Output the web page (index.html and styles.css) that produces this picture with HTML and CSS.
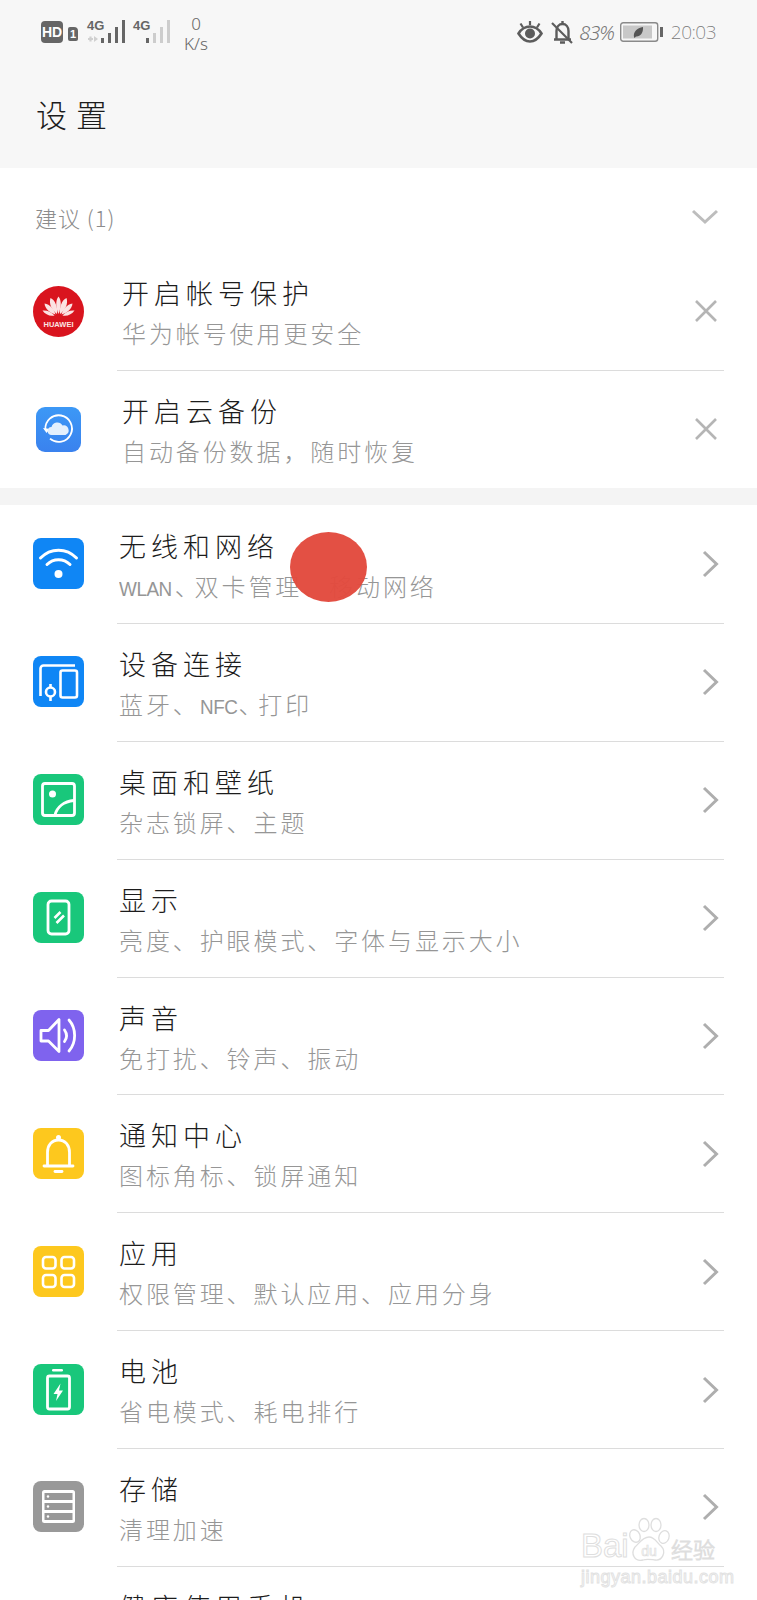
FILE: index.html
```html
<!DOCTYPE html>
<html lang="zh-CN">
<head>
    <meta charset="UTF-8">
    <title>设置</title>
    <link rel="stylesheet" href="styles.css">
</head>
<body>
    <div class="header">
        <div class="statusbar">
            <div class="status-left">
                <span class="hd">HD</span>
                <span class="sim">1</span>
                <div class="net net-first">
                    <span class="net-label">4G</span>
                    <svg class="bars" width="38" height="24" viewBox="0 0 38 24">
                        <path d="M1 19h5M3.500 16.500v5" stroke="#d0d0d0" stroke-width="2.200" fill="none"/>
                        <path d="M7 16v6l4-3z" fill="#d0d0d0"/>
                        <rect x="14" y="18" width="3" height="5" fill="#666"/>
                        <rect x="21" y="13" width="3" height="10" fill="#666"/>
                        <rect x="28" y="7" width="3" height="16" fill="#666"/>
                        <rect x="35" y="0" width="3" height="23" fill="#666"/>
                    </svg>
                </div>
                <div class="net net-second">
                    <span class="net-label">4G</span>
                    <svg class="bars" width="24" height="24" viewBox="0 0 24 24">
                        <rect x="0" y="18" width="3" height="5" fill="#666"/>
                        <rect x="7" y="13" width="3" height="10" fill="#cdcdcd"/>
                        <rect x="14" y="7" width="3" height="16" fill="#cdcdcd"/>
                        <rect x="21" y="0" width="3" height="23" fill="#cdcdcd"/>
                    </svg>
                </div>
                <div class="speed"><span>0</span><span>K/s</span></div>
            </div>
            <div class="status-right">
                <svg width="26" height="24" viewBox="0 0 26 24">
                    <path d="M1.500 13.500C5 8 9 6.500 13 6.500s8 1.500 11.500 7C21 19 17 21.500 13 21.500S5 19 1.500 13.500z" fill="none" stroke="#5c5c5c" stroke-width="2.600"/>
                    <circle cx="13" cy="13.500" r="5" fill="#5c5c5c"/>
                    <path d="M13 1v4M3.500 3.500l2.500 4M22.500 3.500L20 7.500" stroke="#5c5c5c" stroke-width="2.200"/>
                </svg>
                <svg class="bell-off" width="23" height="25" viewBox="0 0 23 25">
                    <path d="M3 19.500h17M5.500 19.500V11c0-4 2.500-7 6-7s6 3 6 7v8.500" fill="none" stroke="#5c5c5c" stroke-width="2.400"/>
                    <path d="M11.500 1v3M9 22.500h5" stroke="#5c5c5c" stroke-width="2.400"/>
                    <path d="M1 3l20 20" stroke="#5c5c5c" stroke-width="2.200"/>
                </svg>
                <span class="percent">83%</span>
                <svg class="battery" width="44" height="20" viewBox="0 0 44 20">
                    <rect x="0.700" y="0.700" width="37" height="18.600" rx="2.500" fill="none" stroke="#8a8a8a" stroke-width="1.400"/>
                    <rect x="3" y="3.500" width="29" height="13" fill="#c8c8c8"/>
                    <path d="M14 15c-1-5 3-9 9-10 .500 6-3 10-7 9.500l-1.500 1.500z" fill="#555"/>
                    <rect x="40" y="5" width="3" height="10" fill="#666"/>
                </svg>
                <span class="clock">20:03</span>
            </div>
        </div>
        <h1 class="page-title">设置</h1>
    </div>

    <section class="suggest">
        <div class="suggest-head">
            <span class="suggest-label">建议 (1)</span>
            <svg width="28" height="16" viewBox="0 0 28 16"><path d="M2 2l12 11L26 2" fill="none" stroke="#bdbdbd" stroke-width="3"/></svg>
        </div>
        <div class="row row-suggest">
            <div class="icon">
                <svg width="51" height="51" viewBox="0 0 51 51">
                    <circle cx="25.500" cy="25.500" r="25.500" fill="#d9141e"/>
                    <g fill="#fbe3e3">
                        <path d="M25.500 28C23 22 22 15 25.500 10.500 29 15 28 22 25.500 28z"/>
                        <path d="M24 28C19 24 15.500 18 17.500 12 22 14 25 21 24 28z"/>
                        <path d="M27 28C32 24 35.500 18 33.500 12 29 14 26 21 27 28z"/>
                        <path d="M22.500 28.500C17 27 12 23 11.500 17.500 17 18.500 21 23 22.500 28.500z"/>
                        <path d="M28.500 28.500C34 27 39 23 39.500 17.500 34 18.500 30 23 28.500 28.500z"/>
                        <path d="M21.500 29.500C17 30.500 12 28.500 9.500 24.500 14 24 18.500 26 21.500 29.500z"/>
                        <path d="M29.500 29.500C34 30.500 39 28.500 41.500 24.500 37 24 32.500 26 29.500 29.500z"/>
                    </g>
                    <text class="huawei-text" x="25.500" y="40.500" text-anchor="middle">HUAWEI</text>
                </svg>
            </div>
            <div class="row-main">
                <div class="row-text">
                    <div class="row-title">开启帐号保护</div>
                    <div class="row-sub">华为帐号使用更安全</div>
                </div>
                <svg class="close" width="24" height="24" viewBox="0 0 24 24"><path d="M2 2l20 20M22 2L2 22" stroke="#b5b5b5" stroke-width="2.600"/></svg>
            </div>
        </div>
        <div class="row row-suggest">
            <div class="icon">
                <svg width="51" height="51" viewBox="0 0 51 51">
                    <defs>
                        <linearGradient id="cloudbg" x1="0" y1="0" x2="0" y2="1">
                            <stop offset="0" stop-color="#3c98f6"/>
                            <stop offset="1" stop-color="#3a82ee"/>
                        </linearGradient>
                    </defs>
                    <rect x="3" y="3" width="45" height="45" rx="9" fill="url(#cloudbg)"/>
                    <path d="M12.500 27A13.300 13.300 0 1 1 18 35.500" fill="none" stroke="#fff" stroke-width="1.800" transform="rotate(6 25.500 25.500)"/>
                    <path d="M10 24l3.500 5 3.500-4z" fill="#fff"/>
                    <path d="M19 31a4 4 0 0 1-.500-8 6 6 0 0 1 11-1.500 5 5 0 0 1 3 9.500z" fill="#e4f0fd"/>
                </svg>
            </div>
            <div class="row-main no-line">
                <div class="row-text">
                    <div class="row-title">开启云备份</div>
                    <div class="row-sub">自动备份数据，随时恢复</div>
                </div>
                <svg class="close" width="24" height="24" viewBox="0 0 24 24"><path d="M2 2l20 20M22 2L2 22" stroke="#b5b5b5" stroke-width="2.600"/></svg>
            </div>
        </div>
    </section>

    <div class="band"></div>

    <section class="list">
        <div class="row">
            <div class="icon icon-blue">
                <svg width="51" height="51" viewBox="0 0 51 51" fill="none" stroke="#fff" stroke-width="3" stroke-linecap="round">
                    <path d="M7.500 20c10-10.500 26-10.500 36 0"/>
                    <path d="M14 26.500c6.500-6.500 16.500-6.500 23 0"/>
                    <circle cx="25.500" cy="36" r="4" fill="#fff" stroke="none"/>
                </svg>
            </div>
            <div class="row-main">
                <div class="row-text">
                    <div class="row-title">无线和网络</div>
                    <div class="row-sub"><span class="latin">WLAN</span><span class="dun">、</span>双卡管理、移动网络</div>
                </div>
                <svg class="chevron" width="17" height="28" viewBox="0 0 17 28"><path d="M2 2l12.500 12L2 26" fill="none" stroke="#aeaeae" stroke-width="3"/></svg>
            </div>
        </div>
        <div class="row">
            <div class="icon icon-blue">
                <svg width="51" height="51" viewBox="0 0 51 51" fill="none" stroke="#fff" stroke-width="2.600">
                    <path d="M7.500 40V12.500a3 3 0 0 1 3-3H42"/>
                    <rect x="27.500" y="14.500" width="16.500" height="27" rx="2"/>
                    <circle cx="17.500" cy="36" r="4.500"/>
                    <path d="M17.500 28v3M17.500 41v4"/>
                </svg>
            </div>
            <div class="row-main">
                <div class="row-text">
                    <div class="row-title">设备连接</div>
                    <div class="row-sub">蓝牙、<span class="latin">NFC</span><span class="dun">、</span>打印</div>
                </div>
                <svg class="chevron" width="17" height="28" viewBox="0 0 17 28"><path d="M2 2l12.500 12L2 26" fill="none" stroke="#aeaeae" stroke-width="3"/></svg>
            </div>
        </div>
        <div class="row">
            <div class="icon icon-green">
                <svg width="51" height="51" viewBox="0 0 51 51" fill="none" stroke="#fff" stroke-width="2.800">
                    <rect x="9.500" y="9.500" width="32" height="32" rx="2.500"/>
                    <circle cx="19.500" cy="20" r="3.500" fill="#fff" stroke="none"/>
                    <path d="M22 41c2-8 9-13.500 19-14.500"/>
                </svg>
            </div>
            <div class="row-main">
                <div class="row-text">
                    <div class="row-title">桌面和壁纸</div>
                    <div class="row-sub">杂志锁屏、主题</div>
                </div>
                <svg class="chevron" width="17" height="28" viewBox="0 0 17 28"><path d="M2 2l12.500 12L2 26" fill="none" stroke="#aeaeae" stroke-width="3"/></svg>
            </div>
        </div>
        <div class="row">
            <div class="icon icon-green">
                <svg width="51" height="51" viewBox="0 0 51 51" fill="none" stroke="#fff" stroke-width="2.800">
                    <rect x="15" y="9" width="21" height="33" rx="3.500"/>
                    <path d="M21.500 26l6-6M23.500 31l7.500-7.500" stroke-width="2.600"/>
                </svg>
            </div>
            <div class="row-main">
                <div class="row-text">
                    <div class="row-title">显示</div>
                    <div class="row-sub">亮度、护眼模式、字体与显示大小</div>
                </div>
                <svg class="chevron" width="17" height="28" viewBox="0 0 17 28"><path d="M2 2l12.500 12L2 26" fill="none" stroke="#aeaeae" stroke-width="3"/></svg>
            </div>
        </div>
        <div class="row">
            <div class="icon icon-purple">
                <svg width="51" height="51" viewBox="0 0 51 51" fill="none" stroke="#fff" stroke-width="2.800" stroke-linecap="round" stroke-linejoin="round">
                    <path d="M8 20.500h7.500L26 9.500v32L15.500 31H8z"/>
                    <path d="M31.500 20c2.500 3.500 2.500 8 0 11.500"/>
                    <path d="M36 10c7.500 8.500 7.500 22.500 0 31"/>
                </svg>
            </div>
            <div class="row-main">
                <div class="row-text">
                    <div class="row-title">声音</div>
                    <div class="row-sub">免打扰、铃声、振动</div>
                </div>
                <svg class="chevron" width="17" height="28" viewBox="0 0 17 28"><path d="M2 2l12.500 12L2 26" fill="none" stroke="#aeaeae" stroke-width="3"/></svg>
            </div>
        </div>
        <div class="row">
            <div class="icon icon-yellow">
                <svg width="51" height="51" viewBox="0 0 51 51" fill="none" stroke="#fff" stroke-width="2.800" stroke-linecap="round">
                    <path d="M11 38h29M14.500 38V24.500c0-7.500 4.500-12.500 11-12.500s11 5 11 12.500V38"/>
                    <circle cx="25.500" cy="9.500" r="2.500" fill="#fff" stroke="none"/>
                    <path d="M22 43.500h7"/>
                </svg>
            </div>
            <div class="row-main">
                <div class="row-text">
                    <div class="row-title">通知中心</div>
                    <div class="row-sub">图标角标、锁屏通知</div>
                </div>
                <svg class="chevron" width="17" height="28" viewBox="0 0 17 28"><path d="M2 2l12.500 12L2 26" fill="none" stroke="#aeaeae" stroke-width="3"/></svg>
            </div>
        </div>
        <div class="row">
            <div class="icon icon-yellow">
                <svg width="51" height="51" viewBox="0 0 51 51" fill="none" stroke="#fff" stroke-width="2.600">
                    <rect x="10" y="11" width="12.500" height="11.500" rx="3"/>
                    <rect x="28.500" y="11" width="12.500" height="11.500" rx="3"/>
                    <rect x="10" y="29" width="12.500" height="12" rx="3"/>
                    <rect x="28.500" y="29" width="12.500" height="12" rx="3"/>
                </svg>
            </div>
            <div class="row-main">
                <div class="row-text">
                    <div class="row-title">应用</div>
                    <div class="row-sub">权限管理、默认应用、应用分身</div>
                </div>
                <svg class="chevron" width="17" height="28" viewBox="0 0 17 28"><path d="M2 2l12.500 12L2 26" fill="none" stroke="#aeaeae" stroke-width="3"/></svg>
            </div>
        </div>
        <div class="row">
            <div class="icon icon-green">
                <svg width="51" height="51" viewBox="0 0 51 51" fill="none" stroke="#fff" stroke-width="2.800">
                    <rect x="19" y="5" width="11" height="2.400" rx="1.200" fill="#fff" stroke="none"/>
                    <rect x="14.500" y="12" width="22" height="33" rx="2"/>
                    <path d="M27.500 19.500l-7 10.500h4l-1.500 7 7-10.500h-4z" fill="#fff" stroke="none"/>
                </svg>
            </div>
            <div class="row-main">
                <div class="row-text">
                    <div class="row-title">电池</div>
                    <div class="row-sub">省电模式、耗电排行</div>
                </div>
                <svg class="chevron" width="17" height="28" viewBox="0 0 17 28"><path d="M2 2l12.500 12L2 26" fill="none" stroke="#aeaeae" stroke-width="3"/></svg>
            </div>
        </div>
        <div class="row">
            <div class="icon icon-gray">
                <svg width="51" height="51" viewBox="0 0 51 51">
                    <rect x="9" y="9" width="33" height="33" rx="2.500" fill="#fff"/>
                    <rect x="11.500" y="12" width="28" height="7" fill="#999"/>
                    <rect x="11.500" y="22" width="28" height="7" fill="#999"/>
                    <rect x="11.500" y="32" width="28" height="7" fill="#999"/>
                    <circle cx="15" cy="15.500" r="1.200" fill="#fff"/>
                    <circle cx="15" cy="25.500" r="1.200" fill="#fff"/>
                    <circle cx="15" cy="35.500" r="1.200" fill="#fff"/>
                </svg>
            </div>
            <div class="row-main">
                <div class="row-text">
                    <div class="row-title">存储</div>
                    <div class="row-sub">清理加速</div>
                </div>
                <svg class="chevron" width="17" height="28" viewBox="0 0 17 28"><path d="M2 2l12.500 12L2 26" fill="none" stroke="#aeaeae" stroke-width="3"/></svg>
            </div>
        </div>
        <div class="row">
            <div class="icon"></div>
            <div class="row-main no-line">
                <div class="row-text">
                    <div class="row-title">健康使用手机</div>
                </div>
            </div>
        </div>
    </section>

    <div class="touch-dot"></div>

    <div class="watermark">
        <div class="wm-top">
            <span class="wm-bai">Bai</span>
            <svg class="wm-paw" width="44" height="46" viewBox="0 0 44 46" fill="#fff" stroke="#dedede" stroke-width="1.300">
                <ellipse cx="8" cy="19" rx="5" ry="6.500" transform="rotate(-25 8 19)"/>
                <ellipse cx="17" cy="8" rx="5" ry="6.500"/>
                <ellipse cx="29" cy="8" rx="5" ry="6.500"/>
                <ellipse cx="37" cy="20" rx="5" ry="6.500" transform="rotate(20 37 20)"/>
                <path d="M22 20c6 0 8 6 12 9 6 6 1 15-6 14-4-.500-8-1.500-12 0-8 2-13-6-8-13 4-3 7-10 14-10z"/>
                <text class="wm-du" x="22" y="39" text-anchor="middle">du</text>
            </svg>
            <span class="wm-cn">经验</span>
        </div>
        <div class="wm-url">jingyan.baidu.com</div>
    </div>
</body>
</html>
```

FILE: styles.css
```css
html, body {
    margin: 0;
    padding: 0;
}

body {
    position: relative;
    height: 1600px;
    overflow: hidden;
    background-color: white;
    font-family: "Noto Sans CJK SC", "Noto Sans", sans-serif;
    font-weight: 300;
}

.header {
    height: 168px;
    background-color: #f7f7f7;
}

.statusbar {
    display: flex;
    justify-content: space-between;
    align-items: flex-start;
    height: 24px;
    padding: 20px 41px 0 41px;
}

.status-left {
    display: flex;
    align-items: flex-start;
}

.hd {
    width: 22px;
    height: 22px;
    margin-top: 1px;
    background-color: #666;
    border-radius: 4px;
    color: white;
    font-family: "Liberation Sans", sans-serif;
    font-size: 14px;
    font-weight: bold;
    line-height: 22px;
    text-align: center;
}

.sim {
    width: 10px;
    height: 14px;
    margin: 7px 0 0 5px;
    background-color: #666;
    border-radius: 2px 4px 2px 2px;
    color: white;
    font-family: "Liberation Sans", sans-serif;
    font-size: 11px;
    font-weight: bold;
    line-height: 14px;
    text-align: center;
}

.net {
    position: relative;
    height: 24px;
    margin-left: 9px;
}

.net-first {
    width: 38px;
}

.net-second {
    width: 37px;
    margin-left: 8px;
}

.net-label {
    position: absolute;
    left: 0;
    top: -1px;
    color: #666;
    font-family: "Liberation Sans", sans-serif;
    font-size: 13px;
    font-weight: bold;
    line-height: 14px;
}

.bars {
    position: absolute;
    right: 0;
    top: 0;
}

.speed {
    display: flex;
    flex-direction: column;
    align-items: center;
    width: 26px;
    margin: -6px 0 0 13px;
    color: #666;
    font-family: "Noto Sans", sans-serif;
    font-size: 17px;
    line-height: 20px;
}

.status-right {
    display: flex;
    align-items: center;
    height: 24px;
}

.bell-off {
    margin-left: 8px;
}

.percent {
    margin-left: 5px;
    color: #777;
    font-family: "Noto Sans", sans-serif;
    font-size: 20px;
    font-style: italic;
    letter-spacing: -1px;
}

.battery {
    margin-left: 6px;
}

.clock {
    margin-left: 7px;
    color: #777;
    font-family: "Noto Sans", sans-serif;
    font-size: 19px;
    font-weight: 200;
    letter-spacing: -0.500px;
}

.page-title {
    margin: 47px 0 0 36px;
    color: #1c1c1c;
    font-size: 31px;
    font-weight: 300;
    line-height: 46px;
    letter-spacing: 9px;
}

.suggest-head {
    display: flex;
    justify-content: space-between;
    align-items: center;
    height: 85px;
    padding: 12px 38px 0 35px;
    box-sizing: border-box;
}

.suggest-label {
    color: #8c8c8c;
    font-size: 22px;
    letter-spacing: 1px;
}

.band {
    height: 17px;
    background-color: #f4f4f4;
}

.list {
    margin-top: 1px;
}

.row {
    display: flex;
    height: 117.875px;
    padding-left: 33px;
    box-sizing: border-box;
}

.row-suggest {
    height: 117.500px;
}

.icon {
    flex: 0 0 51px;
    align-self: center;
    height: 51px;
    margin-right: 33px;
    border-radius: 8px;
}

.list .icon {
    margin-bottom: 2px;
}

.icon svg {
    display: block;
}

.icon-blue {
    background-color: #0f86f5;
}

.icon-green {
    background-color: #19c77b;
}

.icon-purple {
    background-color: #7f63ee;
}

.icon-yellow {
    background-color: #fdc81e;
}

.icon-gray {
    background-color: #999;
}

.huawei-text {
    fill: #fbe3e3;
    font-family: "Liberation Sans", sans-serif;
    font-size: 7.500px;
    font-weight: bold;
}

.row-main {
    flex: 1;
    display: flex;
    justify-content: space-between;
    align-items: center;
    margin-right: 33px;
    padding-left: 2px;
    padding-right: 5px;
    border-bottom: 1px solid #dcdcdc;
}

.row-suggest .row-main {
    padding-left: 5px;
}

.no-line {
    border-bottom: none;
}

.row-text {
    align-self: flex-start;
    padding-top: 22px;
}

.row-title {
    color: #1c1c1c;
    font-size: 27px;
    line-height: 36px;
    letter-spacing: 5px;
    white-space: nowrap;
}

.row-sub {
    margin-top: 2px;
    color: #969696;
    font-size: 24px;
    line-height: 40px;
    letter-spacing: 2.900px;
    white-space: nowrap;
}

.latin {
    display: inline-block;
    margin-right: -3px;
    font-family: "Liberation Sans", sans-serif;
    font-size: 21px;
    font-weight: normal;
    letter-spacing: -0.500px;
    transform: scaleX(0.9);
    transform-origin: left center;
}

.dun {
    margin-right: -7px;
}

.close {
    margin-right: 1px;
}

.touch-dot {
    position: absolute;
    left: 290px;
    top: 532px;
    width: 77px;
    height: 70px;
    background-color: rgba(226, 74, 62, 0.97);
    border-radius: 50%;
}

.watermark {
    position: absolute;
    left: 581px;
    top: 1517px;
    width: 140px;
    color: white;
}

.wm-top {
    display: flex;
    align-items: flex-end;
    height: 46px;
}

.wm-bai {
    width: 46px;
    color: white;
    font-family: "Liberation Sans", sans-serif;
    font-size: 33px;
    line-height: 34px;
    -webkit-text-stroke: 1px #dedede;
}

.wm-du {
    fill: #fff;
    stroke: #dedede;
    stroke-width: 0.700;
    font-family: "Liberation Sans", sans-serif;
    font-size: 14px;
}

.wm-cn {
    color: white;
    font-size: 22px;
    line-height: 30px;
    -webkit-text-stroke: 1px #dedede;
}

.wm-url {
    margin-top: 4px;
    color: white;
    font-family: "Liberation Sans", sans-serif;
    font-size: 18px;
    line-height: 20px;
    letter-spacing: 0.500px;
    -webkit-text-stroke: 1px #e2e2e2;
    white-space: nowrap;
}
```
